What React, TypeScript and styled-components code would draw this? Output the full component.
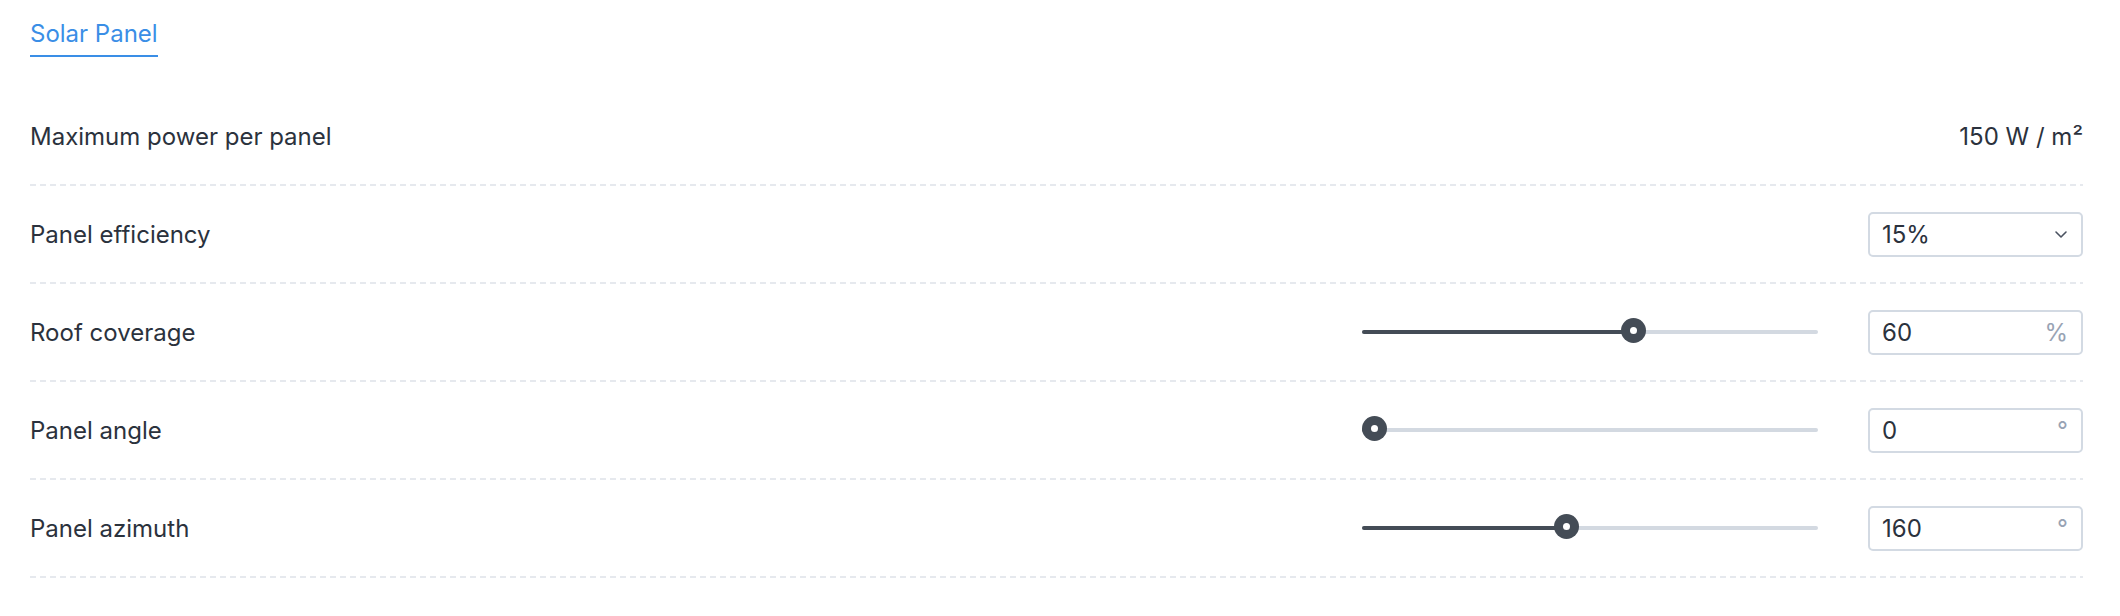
import React from "react";
import styled, { createGlobalStyle } from "styled-components";

const GlobalStyle = createGlobalStyle`
  html, body { margin: 0; padding: 0; background: #ffffff; }
  body { font-family: Inter, "Noto Sans", sans-serif; color: #2b323d; }
  * { box-sizing: border-box; }
`;

const Page = styled.div`
  padding: 0 37px 0 30px;
`;

const TabBar = styled.div`
  display: flex;
  padding-top: 19px;
`;

const Tab = styled.div<{ $active?: boolean }>`
  font-size: 24px;
  line-height: 30px;
  padding-bottom: 6px;
  color: ${(p) => (p.$active ? "#3a8ee6" : "#6b7280")};
  border-bottom: 2px solid ${(p) => (p.$active ? "#3a8ee6" : "transparent")};
`;

const List = styled.div`
  margin-top: 31px;
  display: flex;
  flex-direction: column;
`;

const Row = styled.div`
  display: flex;
  align-items: center;
  height: 98px;
  padding-bottom: 2px;
  background: repeating-linear-gradient(to right, #e6e9ee 0 6px, transparent 6px 10px)
    left bottom / 100% 2px no-repeat;
`;

const Label = styled.div`
  flex: 1;
  font-size: 24px;
  color: #2b323d;
`;

const Value = styled.div`
  font-size: 24px;
  color: #2b323d;
`;

const Box = styled.div`
  width: 215px;
  height: 45px;
  border: 2px solid #d3dae3;
  border-radius: 5px;
  display: flex;
  align-items: center;
  justify-content: space-between;
  padding: 0 13px 0 12px;
  font-size: 24px;
  color: #2b323d;
  background: #fff;
`;

const Unit = styled.span`
  color: #98a3b4;
  font-size: 24px;
`;

const SliderWrap = styled.div`
  width: 456px;
  margin-right: 50px;
  height: 26px;
  display: flex;
  align-items: center;
`;

const Track = styled.div`
  position: relative;
  width: 100%;
  height: 4px;
  border-radius: 2px;
  background: #d3d9e1;
`;

const Fill = styled.div`
  height: 100%;
  border-radius: 2px;
  background: #444c56;
`;

const Thumb = styled.div`
  position: absolute;
  top: 50%;
  width: 25px;
  height: 25px;
  margin-left: -12.5px;
  margin-top: -14px;
  border-radius: 50%;
  background: #444c56;
  display: flex;
  align-items: center;
  justify-content: center;
  &::after {
    content: "";
    width: 7px;
    height: 7px;
    border-radius: 50%;
    background: #fff;
  }
`;

const Chevron = () => (
  <svg width="14" height="9" viewBox="0 0 14 9" fill="none">
    <path d="M2 2l5 5 5-5" stroke="#4a5260" strokeWidth="1.6" strokeLinecap="round" strokeLinejoin="round" />
  </svg>
);

const Slider = ({ value, max }: { value: number; max: number }) => {
  const width = 456;
  const r = 12.5;
  const frac = value / max;
  const center = r + frac * (width - 2 * r);
  return (
    <SliderWrap>
      <Track>
        <Fill style={{ width: `${center}px` }} />
        <Thumb style={{ left: `${center}px` }} />
      </Track>
    </SliderWrap>
  );
};

const rows = [
  { label: "Roof coverage", value: 60, max: 100, unit: "%" },
  { label: "Panel angle", value: 0, max: 90, unit: "°" },
  { label: "Panel azimuth", value: 160, max: 360, unit: "°" },
];

export default function App() {
  return (
    <Page>
      <GlobalStyle />
      <TabBar>
        <Tab $active>Solar Panel</Tab>
      </TabBar>
      <List>
        <Row>
          <Label>Maximum power per panel</Label>
          <Value>150 W / m²</Value>
        </Row>
        <Row>
          <Label>Panel efficiency</Label>
          <Box>
            <span>15%</span>
            <Chevron />
          </Box>
        </Row>
        {rows.map((r) => (
          <Row key={r.label}>
            <Label>{r.label}</Label>
            <Slider value={r.value} max={r.max} />
            <Box>
              <span>{r.value}</span>
              <Unit>{r.unit}</Unit>
            </Box>
          </Row>
        ))}
      </List>
    </Page>
  );
}
